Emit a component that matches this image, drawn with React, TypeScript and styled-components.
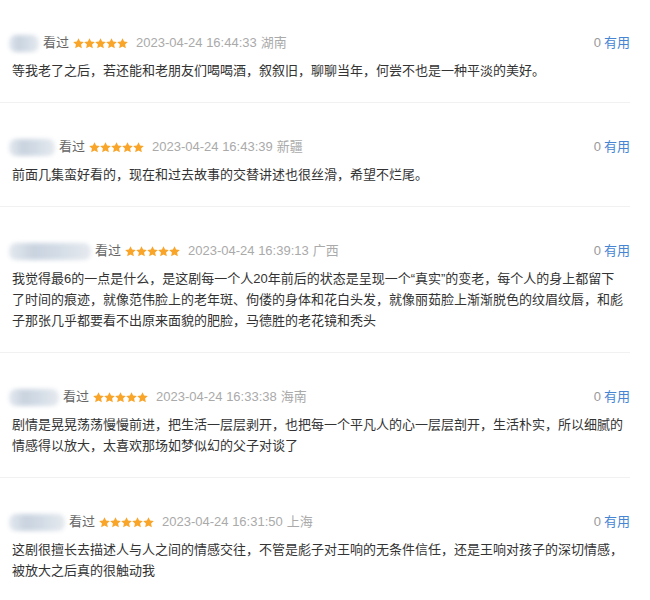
import React from "react";
import styled, { createGlobalStyle } from "styled-components";

const Global = createGlobalStyle`
  html, body { margin: 0; padding: 0; background: #fff; }
  body { font-family: "Liberation Sans", "Noto Sans CJK SC", sans-serif; }
`;

const List = styled.div`
  width: 630px;
  display: flex;
  flex-direction: column;
`;

const Item = styled.div`
  padding: 34px 0 21px 12px;
  border-bottom: 1px solid #f1f1f1;
  &:first-child { padding-top: 33px; }
`;

const Header = styled.div`
  display: flex;
  align-items: center;
  justify-content: space-between;
  height: 20px;
  line-height: 20px;
  font-size: 13px;
`;

const Meta = styled.div`
  display: flex;
  align-items: center;
  gap: 4px;
`;

const Name = styled.span<{ $w: number }>`
  display: inline-block;
  width: ${(p) => p.$w}px;
  height: 17px;
  margin-left: -3px;
  border-radius: 7px;
  background: linear-gradient(90deg, #e4e9ef 0%, #c9d3df 30%, #d3dce6 60%, #e6eaef 100%);
  filter: blur(2px);
`;

const Watched = styled.span`
  color: #666;
`;

const Stars = styled.span`
  display: inline-flex;
  align-items: center;
`;

const DateText = styled.span`
  color: #aaa;
  margin-left: 4px;
`;

const Region = styled.span`
  color: #aaa;
`;

const Useful = styled.span`
  color: #999;
  white-space: nowrap;
`;

const UsefulLink = styled.span`
  color: #4585d2;
  margin-left: 3px;
`;

const Body = styled.p`
  margin: 7px 0 0;
  font-size: 13px;
  line-height: 21px;
  color: #333;
  white-space: nowrap;
`;

const Star = () => (
  <svg width="11" height="11" viewBox="0 0 24 24">
    <path
      d="M12 0.5l3.5 7.4 8.1.9-6 5.5 1.7 8.1L12 18.3l-7.3 4.1 1.7-8.1-6-5.5 8.1-.9z"
      fill="#f8a52a"
    />
  </svg>
);

type Review = { w: number; time: string; region: string; lines: string[] };

const reviews: Review[] = [
  {
    w: 30,
    time: "2023-04-24 16:44:33",
    region: "湖南",
    lines: ["等我老了之后，若还能和老朋友们喝喝酒，叙叙旧，聊聊当年，何尝不也是一种平淡的美好。"],
  },
  {
    w: 46,
    time: "2023-04-24 16:43:39",
    region: "新疆",
    lines: ["前面几集蛮好看的，现在和过去故事的交替讲述也很丝滑，希望不烂尾。"],
  },
  {
    w: 82,
    time: "2023-04-24 16:39:13",
    region: "广西",
    lines: [
      "我觉得最6的一点是什么，是这剧每一个人20年前后的状态是呈现一个“真实”的变老，每个人的身上都留下",
      "了时间的痕迹，就像范伟脸上的老年斑、佝偻的身体和花白头发，就像丽茹脸上渐渐脱色的纹眉纹唇，和彪",
      "子那张几乎都要看不出原来面貌的肥脸，马德胜的老花镜和秃头",
    ],
  },
  {
    w: 50,
    time: "2023-04-24 16:33:38",
    region: "海南",
    lines: [
      "剧情是晃晃荡荡慢慢前进，把生活一层层剥开，也把每一个平凡人的心一层层剖开，生活朴实，所以细腻的",
      "情感得以放大，太喜欢那场如梦似幻的父子对谈了",
    ],
  },
  {
    w: 56,
    time: "2023-04-24 16:31:50",
    region: "上海",
    lines: [
      "这剧很擅长去描述人与人之间的情感交往，不管是彪子对王响的无条件信任，还是王响对孩子的深切情感，",
      "被放大之后真的很触动我",
    ],
  },
];

export default function App() {
  return (
    <>
      <Global />
      <List>
        {reviews.map((r, i) => (
          <Item key={i}>
            <Header>
              <Meta>
                <Name $w={r.w} />
                <Watched>看过</Watched>
                <Stars>
                  <Star />
                  <Star />
                  <Star />
                  <Star />
                  <Star />
                </Stars>
                <DateText>{r.time}</DateText>
                <Region>{r.region}</Region>
              </Meta>
              <Useful>
                0<UsefulLink>有用</UsefulLink>
              </Useful>
            </Header>
            <Body>
              {r.lines.map((l, j) => (
                <React.Fragment key={j}>
                  {j > 0 && <br />}
                  {l}
                </React.Fragment>
              ))}
            </Body>
          </Item>
        ))}
      </List>
    </>
  );
}
